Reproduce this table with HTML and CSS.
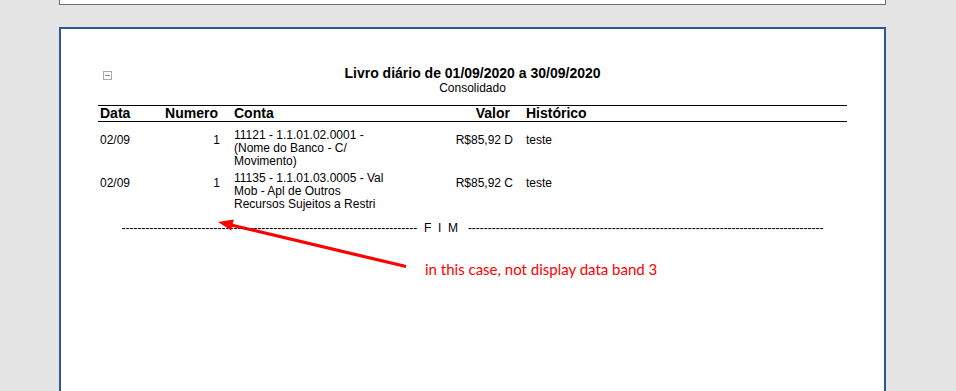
FILE: index.html
```html
<!DOCTYPE html>
<html lang="pt-BR">
<head>
    <meta charset="UTF-8">
    <title>Livro diário - visualização</title>
    <link rel="stylesheet" href="styles.css">
</head>
<body>
    <div class="viewer">
        <!-- tail of the previous page, scrolled mostly out of view -->
        <div class="page page-prev"></div>

        <div class="page page-current">
            <span class="collapse-btn"></span>

            <div class="report-title">Livro diário de 01/09/2020 a 30/09/2020</div>
            <div class="report-subtitle">Consolidado</div>

            <div class="grid-row grid-head">
                <div class="c-data">Data</div>
                <div class="c-num">Numero</div>
                <div class="c-conta">Conta</div>
                <div class="c-valor">Valor</div>
                <div class="c-hist">Histórico</div>
            </div>

            <div class="rows">
                <div class="grid-row">
                    <div class="c-data cell-mid">02/09</div>
                    <div class="c-num cell-mid">1</div>
                    <div class="c-conta">11121 - 1.1.01.02.0001 - (Nome do Banco - C/ Movimento)</div>
                    <div class="c-valor cell-mid">R$85,92 D</div>
                    <div class="c-hist cell-mid">teste</div>
                </div>
                <div class="grid-row">
                    <div class="c-data cell-mid">02/09</div>
                    <div class="c-num cell-mid">1</div>
                    <div class="c-conta">11135 - 1.1.01.03.0005 - Val Mob - Apl de Outros Recursos Sujeitos a Restri</div>
                    <div class="c-valor cell-mid">R$85,92 C</div>
                    <div class="c-hist cell-mid">teste</div>
                </div>
            </div>

            <div class="report-end">--------------------------------------------------------------------------  F  I  M   -----------------------------------------------------------------------------------------</div>
        </div>
    </div>

    <!-- review note drawn on top of the preview -->
    <svg class="note-arrow" width="956" height="391" viewBox="0 0 956 391">
        <line x1="229" y1="224.5" x2="406" y2="266.5" stroke="#ff0000" stroke-width="3.2" stroke-linecap="butt"/>
        <polygon points="218,222 233.8,219.6 231.2,230.6" fill="#ff0000"/>
    </svg>
    <div class="note-text">in this case, not display data band 3</div>
</body>
</html>
```

FILE: styles.css
```css
* {
    margin: 0;
    padding: 0;
    box-sizing: border-box;
}

body {
    background: #e4e4e4;
    font-family: "Liberation Sans", Arial, sans-serif;
    font-size: 12px;
    color: #000;
    overflow: hidden;
    height: 391px;
    position: relative;
}

.viewer {
    width: 827px;
    margin-left: 59px;
    display: flex;
    flex-direction: column;
    gap: 22px;
}

.page {
    background: #fff;
}

.page-prev {
    height: 5px;
    border: 1px solid #6f6f6f;
    border-top: none;
}

.page-current {
    position: relative;
    height: 420px;
    border: 2px solid #2b5797;
    padding: 36px 37px 0;
}

/* little band collapse toggle in the corner */
.collapse-btn {
    position: absolute;
    left: 42px;
    top: 42px;
    width: 9px;
    height: 9px;
    border: 1px solid #a9a9a9;
    background: #fff;
}

.collapse-btn::after {
    content: "";
    position: absolute;
    left: 1px;
    right: 1px;
    top: 3px;
    height: 1px;
    background: #8c8c8c;
}

.report-title {
    text-align: center;
    font-weight: bold;
    font-size: 14px;
    line-height: 16px;
}

.report-subtitle {
    text-align: center;
    font-size: 12px;
    line-height: 14px;
}

.grid-row {
    display: grid;
    grid-template-columns: 52px 84px 156px 123px 1fr;
    line-height: 13.3px;
    padding: 2px 0 1.5px;
}

.grid-head {
    margin-top: 10px;
    border-top: 1px solid #000;
    border-bottom: 1px solid #000;
    font-weight: bold;
    font-size: 14px;
    line-height: 14px;
    padding: 0 0 1px;
}

.c-data {
    padding-left: 2px;
}

.c-num {
    text-align: right;
    padding-right: 14px;
}

.grid-head .c-num {
    padding-right: 16px;
}

.c-conta {
    max-height: 40px;
    overflow: hidden;
}

.c-valor {
    text-align: right;
}

.grid-head .c-valor {
    padding-right: 3px;
}

.c-hist {
    padding-left: 13px;
}

.cell-mid {
    padding-top: 5px;
}

.rows {
    padding-top: 4.5px;
}

.report-end {
    margin: 7.5px 0 0 23.5px;
    white-space: pre;
    line-height: 14px;
    font-size: 12px;
}

.note-arrow {
    position: absolute;
    left: 0;
    top: 0;
    pointer-events: none;
}

.note-text {
    position: absolute;
    left: 425px;
    top: 261px;
    color: #ff0000;
    font-family: Lato, "Open Sans", sans-serif;
    font-size: 15px;
    line-height: 17px;
}
```
